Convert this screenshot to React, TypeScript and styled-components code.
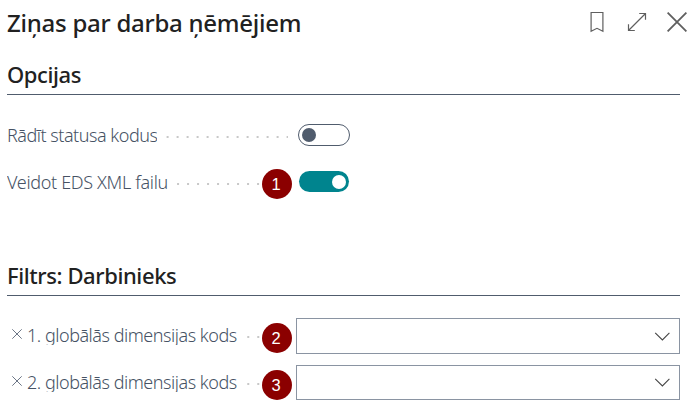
import React from "react";
import styled, { createGlobalStyle } from "styled-components";

const GlobalStyle = createGlobalStyle`
  *, *::before, *::after { box-sizing: border-box; }
  body { margin: 0; background: #fff; font-family: "Noto Sans", "Open Sans", sans-serif; }
`;

const Page = styled.main`
  width: 700px;
  height: 416px;
  overflow: hidden;
  background: #fff;
`;

const Header = styled.header`
  display: flex;
  justify-content: space-between;
  height: 50px;
  padding: 0 13px 0 7px;
`;

const Title = styled.h1`
  margin: 0;
  padding-top: 7px;
  font-size: 24px;
  line-height: 32px;
  font-weight: 500;
  letter-spacing: -0.25px;
  color: #212121;
  white-space: nowrap;
`;

const Actions = styled.div`
  display: flex;
  height: 44px;
  align-items: center;
  gap: 20px;
`;

const IconButton = styled.button`
  display: flex;
  padding: 0;
  border: 0;
  background: none;
  color: #5f5f5f;

  &:first-child {
    margin-right: 3px;
  }
`;

const Section = styled.section<{ $gap: number }>`
  margin: 0 20px ${(p) => p.$gap}px 7px;
`;

const SectionTitle = styled.h2`
  height: 45px;
  margin: 0;
  padding-top: 9px;
  border-bottom: 1px solid #505c6d;
  font-size: 22px;
  line-height: 30px;
  font-weight: 500;
  letter-spacing: -0.4px;
  color: #212121;
  white-space: nowrap;
`;

const Rows = styled.div<{ $top: number }>`
  padding-top: ${(p) => p.$top}px;
`;

const Row = styled.div`
  display: flex;
  height: 47px;
  align-items: flex-start;
`;

const Caption = styled.div`
  position: relative;
  display: flex;
  width: 281px;
  height: 26px;
  flex: none;
`;

const Label = styled.span<{ $track: number }>`
  height: 21px;
  overflow: hidden;
  font-size: 18px;
  line-height: 22px;
  font-weight: 300;
  letter-spacing: ${(p) => p.$track}px;
  color: #465264;
  white-space: nowrap;
`;

const Clear = styled.span`
  display: flex;
  width: 20px;
  padding: 5px 0 0 5px;
  color: #6c7686;
`;

const Leader = styled.span`
  flex: 1;
  height: 2px;
  margin: 12px 0 0 6px;
  background: radial-gradient(circle at 1px 1px, #c8c8c8 1.1px, transparent 1.4px) right -9px top / 10px 2px repeat-x;
`;

const Badge = styled.span`
  position: absolute;
  left: 254.5px;
  top: -2px;
  display: flex;
  width: 30px;
  height: 30px;
  align-items: center;
  justify-content: center;
  padding-right: 1px;
  border-radius: 50%;
  background: #8b0000;
  color: #fff;
  font-family: "Liberation Sans", Arial, sans-serif;
  font-size: 16.5px;
  line-height: 30px;
`;

const FieldCaption = styled(Caption)`
  margin-top: 6px;

  ${Badge} {
    top: -1px;
  }
`;

const Control = styled.div`
  flex: 1;
  padding-left: 10px;
`;

const Switch = styled.button<{ $on: boolean }>`
  display: flex;
  width: ${(p) => (p.$on ? 50 : 52)}px;
  height: ${(p) => (p.$on ? 21 : 22)}px;
  margin-left: ${(p) => (p.$on ? 1 : 0)}px;
  align-items: center;
  justify-content: ${(p) => (p.$on ? "flex-end" : "flex-start")};
  padding: 0 3px;
  border: ${(p) => (p.$on ? "0" : "1px solid #505c6d")};
  border-radius: 11px;
  background: ${(p) => (p.$on ? "#00848e" : "#fff")};
`;

const Knob = styled.span<{ $on: boolean }>`
  width: 14px;
  height: 14px;
  border-radius: 50%;
  background: ${(p) => (p.$on ? "#fff" : "#505c6d")};
`;

const Select = styled.div<{ $height: number }>`
  display: flex;
  width: 384px;
  height: ${(p) => p.$height}px;
  margin-left: -2px;
  align-items: center;
  justify-content: flex-end;
  padding-right: 9px;
  border: 1px solid #8a94a2;
  background: #fff;
  color: #444;
`;

const BookmarkIcon = () => (
  <svg width="14" height="22" viewBox="0 0 14 22" fill="none" stroke="currentColor" strokeWidth="1.2">
    <path d="M1.1 1.5h11.8v18.7L7 17.3l-5.9 2.9z" />
  </svg>
);

const ExpandIcon = () => (
  <svg width="20" height="20" viewBox="0 0 20 20" fill="none" stroke="currentColor" strokeWidth="1.2">
    <path d="M1.5 18.5l17-17M12.2 1.5h6.3v6.3M1.5 12.2v6.3h6.3" />
  </svg>
);

const CloseIcon = () => (
  <svg width="20" height="20" viewBox="0 0 20 20" fill="none" stroke="currentColor" strokeWidth="1.8">
    <path d="M.6.6l18.8 18.8M19.4.6L.6 19.4" />
  </svg>
);

const ClearIcon = () => (
  <svg width="10" height="10" viewBox="0 0 10 10" fill="none" stroke="currentColor" strokeWidth="1">
    <path d="M.3.3l9.4 9.4M9.7.3L.3 9.7" />
  </svg>
);

const ChevronIcon = () => (
  <svg width="16" height="9" viewBox="0 0 16 9" fill="none" stroke="currentColor" strokeWidth="1.1">
    <path d="M1.2.9L8.4 7.9 15.4.9" />
  </svg>
);

const options = [
  { label: "Rādīt statusa kodus", on: false, track: -0.48 },
  { label: "Veidot EDS XML failu", on: true, badge: 1, track: -0.33 },
];

const filters = [
  { label: "1. globālās dimensijas kods", badge: 2, height: 36 },
  { label: "2. globālās dimensijas kods", badge: 3, height: 35 },
];

export default function App() {
  return (
    <Page>
      <GlobalStyle />
      <Header>
        <Title>Ziņas par darba ņēmējiem</Title>
        <Actions>
          <IconButton aria-label="Grāmatzīme"><BookmarkIcon /></IconButton>
          <IconButton aria-label="Izvērst"><ExpandIcon /></IconButton>
          <IconButton aria-label="Aizvērt"><CloseIcon /></IconButton>
        </Actions>
      </Header>
      <Section $gap={33}>
        <SectionTitle>Opcijas</SectionTitle>
        <Rows $top={29}>
          {options.map((o) => (
            <Row key={o.label}>
              <Caption>
                <Label $track={o.track}>{o.label}</Label>
                <Leader />
                {o.badge && <Badge>{o.badge}</Badge>}
              </Caption>
              <Control>
                <Switch $on={o.on} role="switch" aria-checked={o.on} aria-label={o.label}>
                  <Knob $on={o.on} />
                </Switch>
              </Control>
            </Row>
          ))}
        </Rows>
      </Section>
      <Section $gap={0}>
        <SectionTitle>Filtrs: Darbinieks</SectionTitle>
        <Rows $top={22}>
          {filters.map((f) => (
            <Row key={f.label}>
              <FieldCaption>
                <Clear><ClearIcon /></Clear>
                <Label $track={-0.47}>{f.label}</Label>
                <Leader />
                <Badge>{f.badge}</Badge>
              </FieldCaption>
              <Control>
                <Select $height={f.height}><ChevronIcon /></Select>
              </Control>
            </Row>
          ))}
        </Rows>
      </Section>
    </Page>
  );
}
